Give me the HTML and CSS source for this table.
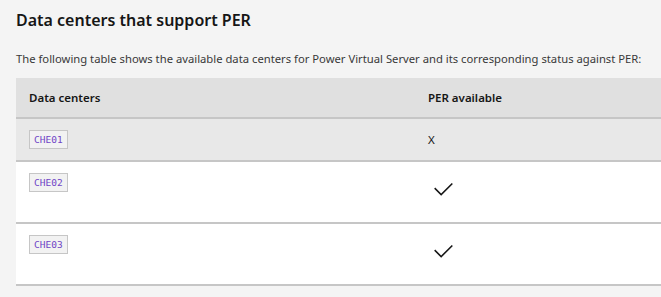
FILE: index.html
```html
<!DOCTYPE html>
<html>
<head>
    <title>Data centers that support PER</title>
    <meta name="viewport" content="width=device-width, initial-scale=1">
    <link rel="stylesheet" href="styles.css">
</head>
<body>
    <div class="section">
        <h2>Data centers that support PER</h2>
        <p class="intro">The following table shows the available data centers for Power Virtual Server and its corresponding status against PER:</p>

        <table class="dc-table">
            <thead>
                <tr>
                    <th>Data centers</th>
                    <th>PER available</th>
                </tr>
            </thead>
            <tbody>
                <tr class="hover">
                    <td><code>CHE01</code></td>
                    <td class="mark">X</td>
                </tr>
                <tr>
                    <td><code>CHE02</code></td>
                    <td>
                        <svg class="check" viewBox="0 0 32 32"><path d="M13 24L4 15 5.414 13.586 13 21.171 26.586 7.586 28 9 13 24z"/></svg>
                    </td>
                </tr>
                <tr>
                    <td><code>CHE03</code></td>
                    <td>
                        <svg class="check" viewBox="0 0 32 32"><path d="M13 24L4 15 5.414 13.586 13 21.171 26.586 7.586 28 9 13 24z"/></svg>
                    </td>
                </tr>
            </tbody>
        </table>
    </div>
</body>
</html>
```

FILE: styles.css
```css
body { margin: 0; background-color: #f4f4f4; font-family: "Noto Sans", Arial, sans-serif; color: #161616; overflow: hidden; }
.section { padding: 0 16px; width: 800px; }
h2 { margin: 0; padding-top: 9px; font-size: 16px; font-weight: 600; line-height: 22px; color: #161616; }
.intro { margin: 20px 0 0; font-size: 11.25px; line-height: 16px; color: #393939; }
.dc-table { margin-top: 11px; width: 800px; border-collapse: collapse; table-layout: fixed; font-size: 11.5px; }
.dc-table th { background-color: #e0e0e0; text-align: left; font-weight: 600; padding: 0 13px; height: 39px; border-bottom: 2px solid #c6c6c6; }
.dc-table th + th, .dc-table td + td { padding-left: 12px; }
.dc-table td { background-color: #fff; padding: 11px 13px 11px; vertical-align: top; border-bottom: 2px solid #c6c6c6; }
.dc-table tr.hover td { background-color: #e8e8e8; }
.dc-table td.mark { line-height: 19px; }
code { display: inline-block; font-family: "DejaVu Sans Mono", "Liberation Mono", monospace; font-size: 9.5px; line-height: 17px; padding: 0 4px; color: #6f44c6; background-color: #f2f2f2; border: 1px solid #c6c6c6; }
.check { display: block; width: 25px; height: 25px; margin: 4px 0 9px 3px; fill: #161616; }
```
